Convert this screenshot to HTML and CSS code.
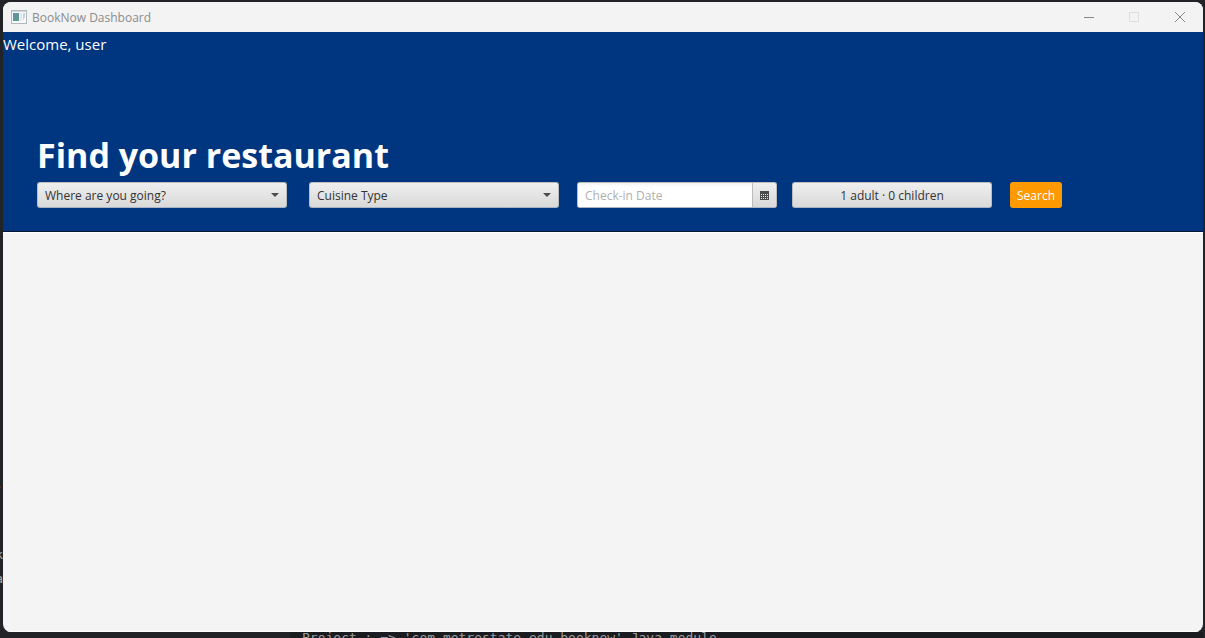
FILE: index.html
```html
<!DOCTYPE html>
<html lang="en">
<head>
<meta charset="utf-8">
<meta name="viewport" content="width=device-width, initial-scale=1">
<title>BookNow Dashboard</title>
<link rel="stylesheet" href="styles.css">
</head>
<body>
<div class="desktop">
  <div class="editor-gutter" aria-hidden="true"><span class="gutter-mark mark-dot">.</span><span class="gutter-mark mark-k">k</span><span class="gutter-mark mark-a">a</span></div>
  <div class="window">
    <header class="titlebar">
      <svg class="app-icon" width="16" height="14" viewBox="0 0 16 14" aria-hidden="true">
        <defs><linearGradient id="pane" x1="0" y1="0" x2="1" y2="1"><stop offset="0" stop-color="#6889ad"/><stop offset="1" stop-color="#57a184"/></linearGradient></defs>
        <rect x=".5" y=".5" width="15" height="13" fill="#f7f9fa" stroke="#b3b8be"/>
        <rect x="1" y="1" width="14" height="1" fill="#cfd6dc"/>
        <rect x="2" y="3" width="6" height="8" fill="url(#pane)"/>
        <rect x="9" y="3" width="2" height="8" fill="#e1e7eb"/>
        <path d="M12 3h2v4l-2 4z" fill="#c3d4df"/>
      </svg>
      <h1 class="title">BookNow Dashboard</h1>
      <div class="controls">
        <button class="control" type="button" aria-label="Minimize"><svg width="12" height="12" viewBox="0 0 12 12"><path d="M2 6.5h10" stroke="#858585"/></svg></button>
        <button class="control" type="button" aria-label="Maximize" disabled><svg width="12" height="12" viewBox="0 0 12 12"><rect x="1.5" y="1.5" width="9" height="9" fill="none" stroke="#dfdfdf"/></svg></button>
        <button class="control" type="button" aria-label="Close"><svg width="12" height="12" viewBox="0 0 12 12"><path d="M1 1l10 10M11 1L1 11" stroke="#858585"/></svg></button>
      </div>
    </header>
    <section class="hero">
      <p class="welcome">Welcome, user</p>
      <form class="finder">
        <h2 class="heading">Find your restaurant</h2>
        <div class="fields">
          <div class="combo">
            <select class="box select" aria-label="Where are you going?"><option>Where are you going?</option></select>
            <svg class="arrow" width="8" height="4" viewBox="0 0 8 4" aria-hidden="true"><path d="M0 0h8L4 4z" fill="#4d4d4d"/></svg>
          </div>
          <div class="combo cuisine">
            <select class="box select" aria-label="Cuisine Type"><option>Cuisine Type</option></select>
            <svg class="arrow" width="8" height="4" viewBox="0 0 8 4" aria-hidden="true"><path d="M0 0h8L4 4z" fill="#4d4d4d"/></svg>
          </div>
          <div class="date">
            <input class="date-input" type="text" placeholder="Check-in Date" aria-label="Check-in Date">
            <button class="date-button" type="button" aria-label="Open calendar">
              <svg width="9" height="9" viewBox="0 0 9 9"><path d="M0 0h9v9H0z" fill="#4a4a4a"/><path d="M1 3.5h7M1 5.5h7M1 7.5h7" stroke="#e6e6e6" stroke-dasharray="1 1"/></svg>
            </button>
          </div>
          <button class="box guests" type="button">1 adult · 0 children</button>
          <button class="search" type="submit">Search</button>
        </div>
      </form>
    </section>
    <main class="results"></main>
  </div>
  <p class="console" aria-hidden="true">Project : =&gt; 'com.metrostate.edu.booknow' Java module</p>
</div>
</body>
</html>
```
FILE: styles.css
```css
* { box-sizing: border-box; }

body {
  margin: 0;
  font-family: "Open Sans", "Noto Sans", sans-serif;
  font-size: 12px;
  color: #333;
}

.desktop {
  position: relative;
  display: flex;
  flex-direction: column;
  height: 100vh;
  padding: 2px 2px 0 3px;
  overflow: hidden;
  background: #222327;
}

.window {
  position: relative;
  display: flex;
  flex: 1;
  flex-direction: column;
  min-height: 0;
  overflow: hidden;
  border-radius: 8px;
  background: #f4f4f4;
}

.titlebar {
  display: flex;
  align-items: center;
  height: 30px;
  padding-left: 8px;
  background: #f3f3f3;
}

.title {
  margin: 0 0 0 5px;
  font-size: 12px;
  font-weight: 400;
  color: #8b8b8b;
}

.controls {
  display: flex;
  height: 100%;
  margin-left: auto;
}

.control {
  display: grid;
  place-items: center;
  width: 46px;
  padding: 0;
  border: 0;
  background: none;
}

.hero {
  display: flex;
  flex-direction: column;
  justify-content: space-between;
  min-height: 200px;
  padding-bottom: 23px;
  border-bottom: 1px solid #001433;
  background: #003580;
}

.welcome {
  margin: 0;
  font-size: 15px;
  line-height: 25px;
  color: #fff;
}

.finder { padding: 0 34px; }

.heading {
  margin: 0;
  font-size: 34px;
  font-weight: 700;
  line-height: 54px;
  color: #fff;
}

.fields { display: flex; }

.combo {
  position: relative;
  flex: 0 1 250px;
}

.cuisine { margin: 0 18px 0 22px; }

.box {
  height: 26px;
  border: 1px solid #bcbcbc;
  border-bottom-color: #a9b4c4;
  border-radius: 3px;
  background: linear-gradient(#efefef, #d9d9d9);
  font: inherit;
  color: #333;
}

.select {
  width: 100%;
  padding: 0 24px 0 7px;
  appearance: none;
}

.arrow {
  position: absolute;
  top: 11px;
  right: 8px;
  pointer-events: none;
}

.date {
  display: flex;
  flex: 0 1 200px;
  height: 26px;
  overflow: hidden;
  border: 1px solid #bcbcbc;
  border-bottom-color: #a9b4c4;
  border-radius: 3px;
  background: #fff;
}

.date-input {
  flex: 1;
  min-width: 0;
  padding: 0 7px;
  border: 0;
  background: linear-gradient(#f3f3f3, #fff 4px);
  font: inherit;
}

.date-input::placeholder { color: #b0b0b0; }

.date-button {
  display: grid;
  place-items: center;
  width: 24px;
  padding: 0;
  border: 0;
  border-left: 1px solid #bcbcbc;
  background: linear-gradient(#efefef, #d9d9d9);
}

.guests {
  flex: 0 1 200px;
  margin: 0 18px 0 15px;
  padding: 0;
}

.search {
  height: 26px;
  padding: 0 7px;
  border: 0;
  border-radius: 3px;
  background: #ff9900;
  font: inherit;
  color: #fff;
}

.results {
  flex: 1;
  border-top: 1px solid #fff;
  border-bottom: 1px solid #fff;
}

.console {
  height: 6px;
  margin: 0 0 0 287px;
  padding-left: 12px;
  overflow: hidden;
  background: #1b1c1f;
  font-family: "DejaVu Sans Mono", monospace;
  font-size: 13px;
  line-height: 12px;
  color: #9a9ca1;
  white-space: nowrap;
}

.editor-gutter {
  position: absolute;
  inset: 0 auto 0 0;
  width: 3px;
  overflow: hidden;
  font-family: "DejaVu Sans Mono", monospace;
  font-size: 13px;
  line-height: 16px;
  color: #a9abb0;
}

.gutter-mark {
  position: absolute;
  right: 0;
}

.mark-dot { top: 476px; }
.mark-k { top: 547px; }
.mark-a { top: 571px; }
```
